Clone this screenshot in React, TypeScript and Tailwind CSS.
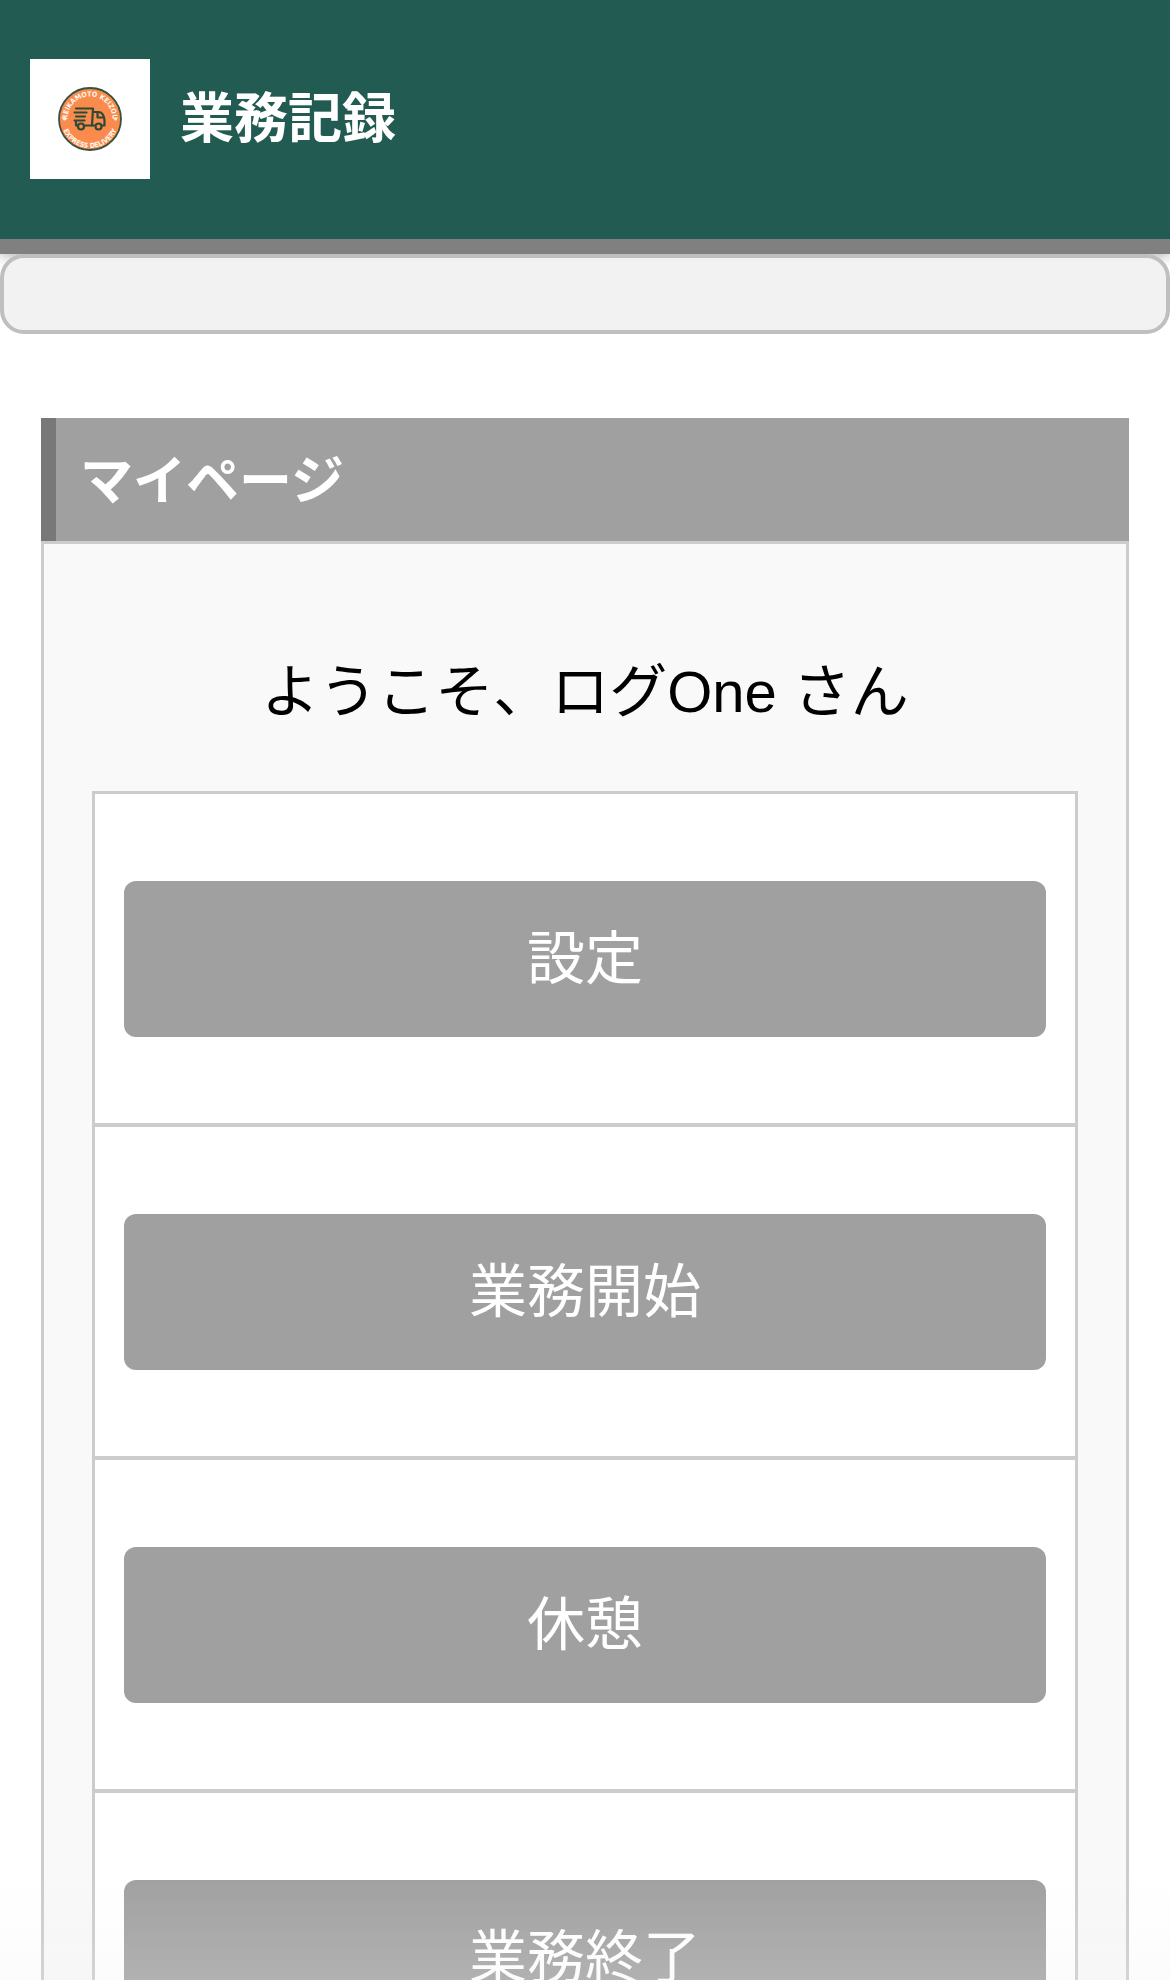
const actions = [
  { label: "設定", id: "settings" },
  { label: "業務開始", id: "start" },
  { label: "休憩", id: "break" },
  { label: "業務終了", id: "finish" },
];

function Logo() {
  return (
    <svg viewBox="0 0 120 120" className="size-[120px] shrink-0 bg-white" aria-hidden="true">
      <defs>
        <path id="ring-top" d="M37.500 60a22.500 22.500 0 0 1 45 0" />
        <path id="ring-bottom" d="M31 60a29 29 0 0 0 58 0" />
      </defs>
      <circle cx="60" cy="60" r="31" fill="#fa8b4c" stroke="#35513f" strokeWidth="1.8" />
      <g
        className="font-['DejaVu_Sans_Condensed','Liberation_Sans',sans-serif] text-[7px] font-bold"
        fill="#fff8f0"
        textAnchor="middle"
      >
        <text><textPath href="#ring-top" startOffset="50%">REIKAMOTO KEIZOU</textPath></text>
        <text><textPath href="#ring-bottom" startOffset="50%">EXPRESS DELIVERY</textPath></text>
      </g>
      <circle cx="34.500" cy="60" r="1.500" fill="#fff8f0" />
      <circle cx="85.500" cy="60" r="1.500" fill="#fff8f0" />
      <g fill="none" stroke="#2b4a38" strokeWidth="2.2" strokeLinecap="round" strokeLinejoin="round">
        <path d="M46 49.500h17L62 66.500H55M46 66.500V63M44.500 53.500h12M46 57.500h9M44.500 61.500h10M46 66.500h1" />
        <path d="M64 53h4.500c3.500 0 5.500 4 6 8v5.500h-2M62 66.500h2" />
        <path d="M67.500 54v4.500h5" />
        <circle cx="51" cy="67.500" r="3" />
        <circle cx="68.500" cy="67.500" r="3" />
      </g>
    </svg>
  );
}

export default function App() {
  return (
    <div className="h-screen overflow-y-auto bg-white font-['Liberation_Sans','Noto_Sans_CJK_JP',sans-serif] [scrollbar-width:none]">
      <header className="flex items-center gap-[30px] border-b-[15px] border-[#808080] bg-[#225b51] px-[30px] pt-[59px] pb-[60px] shadow-[0_0_15px_rgba(0,0,0,0.4)]">
        <Logo />
        <h1 className="text-[54px] leading-[80px] font-bold text-white">業務記録</h1>
      </header>

      <nav className="relative h-[80px] rounded-[24px] border-4 border-[#bfbfbf] bg-[#f2f2f2]" />

      <main className="px-[41px] pt-[84px] pb-[120px]">
        <h2 className="border-l-[15px] border-[#787878] bg-[#a0a0a0] px-6 pt-6 pb-[19px] text-[53px] leading-[80px] font-bold text-white">
          マイページ
        </h2>
        <section className="border-[3px] border-[#ccc] bg-[#f9f9f9] px-12 pt-[104px] pb-12">
          <p className="mb-[55px] text-center text-[58px] leading-[88px] text-black">ようこそ、ログOne さん</p>
          <ul className="divide-y-4 divide-[#ccc] border-[3px] border-[#ccc] bg-white">
            {actions.map((action) => (
              <li key={action.id} className="px-[29px] pt-[87px] pb-[86px]">
                <button
                  type="button"
                  className="h-[156px] w-full rounded-[12px] bg-[#a0a0a0] text-[58px] leading-[88px] text-white"
                >
                  {action.label}
                </button>
              </li>
            ))}
          </ul>
        </section>
      </main>

      <div className="pointer-events-none fixed inset-x-0 bottom-0 h-[110px] bg-linear-to-b from-transparent to-[rgba(240,240,240,0.22)]" />
    </div>
  );
}
